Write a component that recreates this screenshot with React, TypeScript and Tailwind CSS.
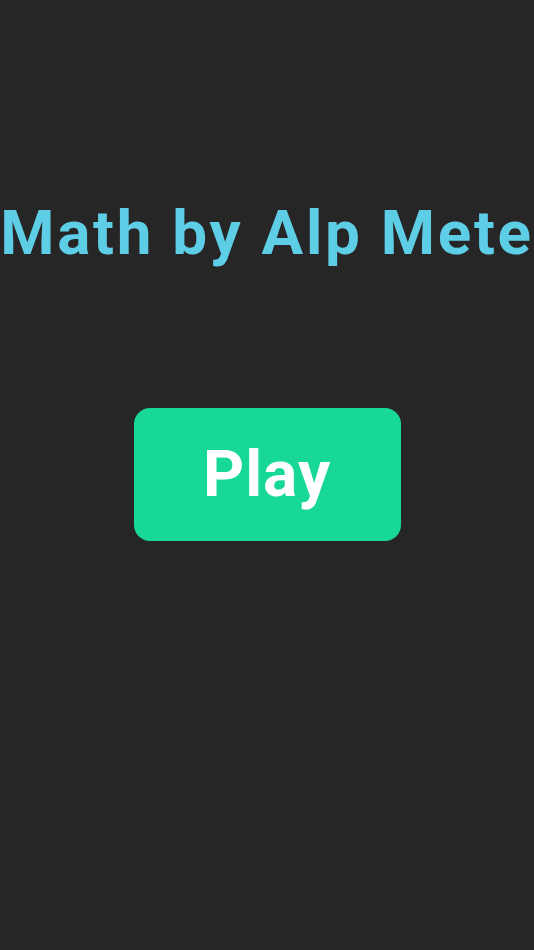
export default function App() {
  return (
    <div className="w-[534px] h-[950px] bg-[#262626] flex flex-col items-center overflow-hidden" style={{ fontFamily: "Roboto, 'Noto Sans', sans-serif" }}>
      <h1 className="mt-[193px] h-[80px] flex items-center justify-center whitespace-nowrap text-[62px] font-bold tracking-[2.7px] text-[#5ecde6] leading-none">
        Math by Alp Mete
      </h1>
      <button className="mt-[135px] w-[267px] h-[133px] rounded-[16px] bg-[#17d898] text-white text-[64px] font-bold tracking-[1px] leading-none flex items-center justify-center">
        Play
      </button>
    </div>
  );
}
